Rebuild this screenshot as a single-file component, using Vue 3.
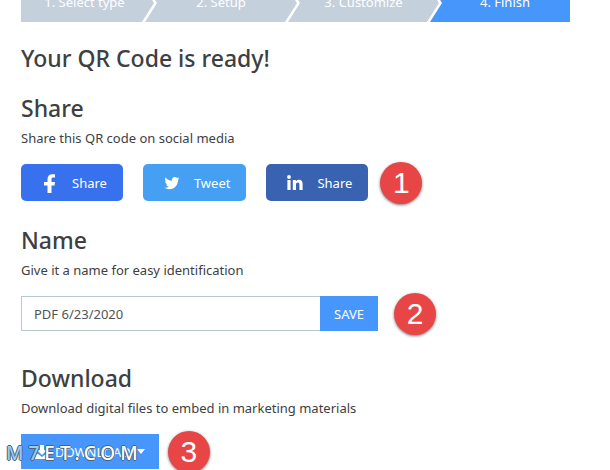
<script setup>
import { ref } from 'vue'

const steps = ['1. Select type', '2. Setup', '3. Customize', '4. Finish']
const current = 3
const name = ref('PDF 6/23/2020')
</script>

<template>
  <main class="page">
    <ol class="steps">
      <li v-for="(step, i) in steps" :key="step" class="step" :class="{ active: i === current }">
        {{ step }}
      </li>
    </ol>

    <h1>Your QR Code is ready!</h1>

    <section class="share">
      <h2>Share</h2>
      <p>Share this QR code on social media</p>
      <div class="row">
        <div class="socials">
          <button type="button" class="social facebook">
            <svg viewBox="0 0 18 18" aria-hidden="true">
              <path d="M6.500 19V11.500H3V8H6.500V5.300C6.500 2 8.300 0.200 11.300 0.200H14V3.600H12.200C11 3.600 10.500 4.200 10.500 5.200V8H14L13.500 11.500H10.500V19Z" />
            </svg>
            Share
          </button>
          <button type="button" class="social twitter">
            <svg viewBox="0 0 24 24" aria-hidden="true">
              <path d="M22 5.900c-.7.300-1.500.5-2.400.6.900-.5 1.500-1.300 1.800-2.200-.8.500-1.700.8-2.600 1a4.100 4.100 0 0 0-7 3.700C8.400 8.900 5.400 7.200 3.400 4.700a4.100 4.100 0 0 0 1.300 5.500c-.7 0-1.300-.2-1.900-.5v.1c0 2 1.400 3.600 3.300 4-.6.200-1.200.2-1.900.1.500 1.600 2 2.800 3.800 2.800A8.200 8.200 0 0 1 2 18.400a11.600 11.600 0 0 0 6.300 1.800c7.500 0 11.700-6.300 11.700-11.700v-.5c.8-.6 1.500-1.300 2-2.100Z" />
            </svg>
            Tweet
          </button>
          <button type="button" class="social linkedin">
            <svg viewBox="0 0 18 18" aria-hidden="true">
              <circle cx="3" cy="3" r="1.900" />
              <path d="M1.400 6H4.600V16H1.400ZM6.800 6H9.900V7.400C10.600 6.300 11.600 5.700 13 5.700C15.600 5.700 16.600 7.400 16.600 10V16H13.400V10.600C13.400 9.200 13 8.400 11.900 8.400C10.600 8.400 10 9.300 10 10.700V16H6.800Z" />
            </svg>
            Share
          </button>
        </div>
        <span class="badge">1</span>
      </div>
    </section>

    <section class="name">
      <h2><label for="code-name">Name</label></h2>
      <p>Give it a name for easy identification</p>
      <div class="row">
        <form class="field" @submit.prevent>
          <input id="code-name" v-model="name" type="text" />
          <button type="submit" class="primary">SAVE</button>
        </form>
        <span class="badge">2</span>
      </div>
    </section>

    <section class="download">
      <h2>Download</h2>
      <p>Download digital files to embed in marketing materials</p>
      <div class="row">
        <div class="download-wrap">
          <button type="button" class="primary download-button">
            <svg class="tray" viewBox="0 0 14 14" aria-hidden="true">
              <path d="M5 0H9V5H12L7 10L2 5H5ZM0 9H3L7 12L11 9H14V14H0Z" />
            </svg>
            DOWNLOAD
            <svg class="caret" viewBox="0 0 8 5" aria-hidden="true"><path d="M0 0H8L4 5Z" /></svg>
          </button>
          <span class="watermark"><span class="tint">M7</span>ET.COM</span>
        </div>
        <span class="badge">3</span>
      </div>
    </section>
  </main>
</template>

<style>
body {
  margin: 0;
  background: #fff;
}
</style>

<style scoped>
.page {
  box-sizing: border-box;
  height: 100vh;
  overflow: hidden;
  padding: 0 40px 0 21px;
  color: #3d4043;
  font: 13px/20px "Noto Sans", "Open Sans", sans-serif;
}

.steps {
  display: grid;
  grid-template-columns: 124fr 143fr 142fr 140fr;
  margin: -16px 0 20px;
  padding: 0;
  list-style: none;
}

.step {
  height: 38px;
  margin-right: -9px;
  background: #c5d0dd;
  color: #fff;
  line-height: 36px;
  text-align: center;
  clip-path: polygon(0 0, calc(100% - 12px) 0, 100% 50%, calc(100% - 12px) 100%, 0 100%, 12px 50%);
}

.step:first-child {
  padding-right: 6px;
  clip-path: polygon(0 0, calc(100% - 12px) 0, 100% 50%, calc(100% - 12px) 100%, 0 100%);
}

.step:last-child {
  margin-right: 0;
  padding-left: 10px;
  clip-path: polygon(0 0, 100% 0, 100% 100%, 0 100%, 12px 50%);
}

.step.active {
  background: #4696fc;
}

h1,
h2 {
  margin: 0;
  font-size: 23px;
  font-weight: 500;
  line-height: 32px;
}

p {
  margin: 4px 0 16px;
}

.share {
  margin-top: 18px;
}

.name {
  margin-top: 23px;
}

.download {
  margin-top: 31px;
}

.row {
  display: flex;
  align-items: center;
  gap: 12px;
}

.name .row {
  gap: 16px;
}

.download .row {
  gap: 9px;
}

.socials {
  display: flex;
  gap: 20px;
}

button {
  border: 0;
  color: #fff;
  font: inherit;
  cursor: pointer;
}

svg {
  flex: none;
  overflow: visible;
  fill: currentColor;
}

.social {
  display: flex;
  align-items: center;
  gap: 13px;
  height: 37px;
  padding: 0 16px 0 20px;
  border-radius: 5px;
}

.social svg {
  width: 18px;
  height: 18px;
}

.facebook {
  background: #3871ee;
}

.twitter {
  background: #459ff2;
}

.linkedin {
  background: #3963b0;
}

.badge {
  flex: none;
  width: 42px;
  height: 42px;
  margin: -4px 0;
  border-radius: 50%;
  background: #e84646;
  box-shadow: 0 1px 3px #777;
  color: #fff;
  font: 30px/42px "Liberation Sans", sans-serif;
  text-align: center;
}

.field {
  display: flex;
  flex: 0 1 357px;
  height: 35px;
}

.field input {
  box-sizing: border-box;
  flex: 1;
  min-width: 0;
  padding: 0 12px;
  border: 1px solid #b8c8cb;
  border-right: 0;
  border-radius: 0;
  background: #fff;
  color: #505356;
  font: inherit;
}

.primary {
  height: 35px;
  padding: 0 14px;
  background: #4696fc;
}

.download-wrap {
  position: relative;
}

.download-button {
  display: flex;
  align-items: center;
  gap: 6px;
}

.tray {
  width: 14px;
  height: 14px;
}

.caret {
  width: 8px;
  height: 5px;
}

.watermark {
  position: absolute;
  top: 7px;
  left: -15px;
  color: #fff;
  font: 500 19px/24px "Noto Sans", sans-serif;
  letter-spacing: 5px;
  text-shadow: -1px 0 #46627c, 1px 0 #46627c, 0 -1px #46627c, 0 1px #46627c;
  white-space: nowrap;
  pointer-events: none;
}

.tint {
  color: #9ccbf0;
}
</style>
